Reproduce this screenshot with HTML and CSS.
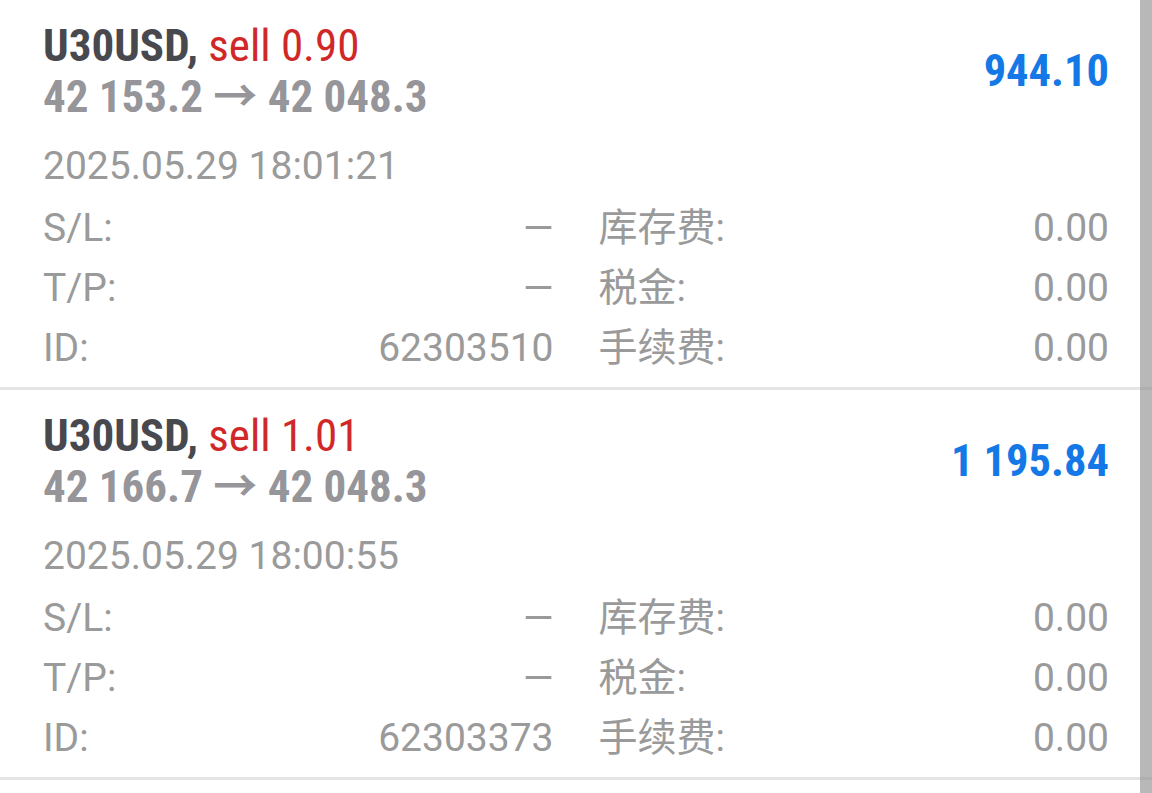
FILE: index.html
```html
<!DOCTYPE html>
<html lang="zh-CN">
<head>
<meta charset="utf-8">
<title>History</title>
<link rel="stylesheet" href="styles.css">
</head>
<body>
<div class="list">
  <div class="item">
    <div class="head">
      <div class="titles">
        <div class="t1"><span class="sym">U30USD,</span> <span class="side">sell 0.90</span></div>
        <div class="t2">42 153.2 <span class="arrow">→</span> 42 048.3</div>
      </div>
      <div class="profit">944.10</div>
    </div>
    <div class="date">2025.05.29 18:01:21</div>
    <div class="grid">
      <div class="cell"><span>S/L:</span><span>—</span></div>
      <div class="cell"><span>库存费:</span><span>0.00</span></div>
      <div class="cell"><span>T/P:</span><span>—</span></div>
      <div class="cell"><span>税金:</span><span>0.00</span></div>
      <div class="cell"><span>ID:</span><span>62303510</span></div>
      <div class="cell"><span>手续费:</span><span>0.00</span></div>
    </div>
  </div>
  <div class="item">
    <div class="head">
      <div class="titles">
        <div class="t1"><span class="sym">U30USD,</span> <span class="side">sell 1.01</span></div>
        <div class="t2">42 166.7 <span class="arrow">→</span> 42 048.3</div>
      </div>
      <div class="profit">1 195.84</div>
    </div>
    <div class="date">2025.05.29 18:00:55</div>
    <div class="grid">
      <div class="cell"><span>S/L:</span><span>—</span></div>
      <div class="cell"><span>库存费:</span><span>0.00</span></div>
      <div class="cell"><span>T/P:</span><span>—</span></div>
      <div class="cell"><span>税金:</span><span>0.00</span></div>
      <div class="cell"><span>ID:</span><span>62303373</span></div>
      <div class="cell"><span>手续费:</span><span>0.00</span></div>
    </div>
  </div>
</div>
<div class="scrollbar"></div>
</body>
</html>
```
FILE: styles.css
```css
html, body {
  margin: 0;
  padding: 0;
  background: #ffffff;
  width: 1152px;
  height: 793px;
  overflow: hidden;
}
body {
  position: relative;
  font-family: Roboto, "Noto Sans CJK SC", sans-serif;
}
.list {
  display: flex;
  flex-direction: column;
}
.item {
  padding: 21px 43px 9px 43px;
  border-bottom: 3px solid #e4e4e4;
}
.head {
  display: flex;
  align-items: center;
  justify-content: space-between;
  height: 100px;
}
.titles {
  display: flex;
  flex-direction: column;
}
.t1, .t2, .profit {
  font-family: "Roboto Condensed", Roboto, sans-serif;
  font-weight: 700;
  font-size: 45px;
  line-height: 50px;
  height: 50px;
  white-space: nowrap;
}
.sym { color: #48484f; }
.side { color: #d02828; font-weight: 400; }
.t2 { color: #95959a; }
.arrow {
  font-family: "Noto Sans CJK SC", sans-serif;
  font-weight: 700;
  font-size: 44px;
  line-height: 1;
}
.profit { color: #1479e6; font-size: 44.5px; }
.date {
  margin-top: 15px;
  height: 62px;
  font-size: 39px;
  line-height: 60px;
  color: #9a9a9a;
}
.grid {
  display: grid;
  grid-template-columns: 1fr 1fr;
  column-gap: 45px;
  grid-auto-rows: 60px;
  font-size: 39px;
  line-height: 60px;
  color: #9a9a9a;
  font-family: Roboto, "Noto Sans CJK SC", sans-serif;
}
.cell {
  display: flex;
  justify-content: space-between;
  white-space: nowrap;
}
.scrollbar {
  position: absolute;
  top: 0;
  right: 0;
  width: 12px;
  height: 793px;
  background: rgba(150, 150, 150, 0.68);
}
```
